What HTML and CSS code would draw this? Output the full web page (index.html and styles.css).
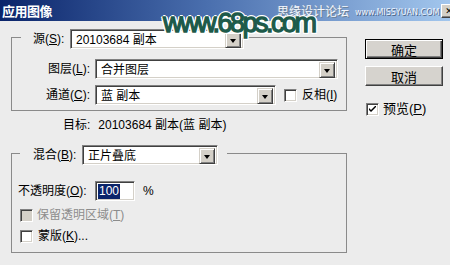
FILE: index.html
```html
<!DOCTYPE html>
<html lang="zh-CN">
<head>
<meta charset="utf-8">
<title>应用图像</title>
<link rel="stylesheet" href="styles.css">
</head>
<body>
<div class="dialog">
  <div class="titlebar">
    <span class="title">应用图像</span>
    <span class="close">✕</span>
  </div>
  <div class="content">
    <div class="main">
      <fieldset class="group group-src">
        <legend class="legend legend-src">
          <span class="lbl lbl-src">源(<u>S</u>):</span>
          <span class="combo combo-src"><span class="combo-text">20103684 副本</span><span class="drop"></span></span>
        </legend>
        <div class="row row-first">
          <span class="lbl lbl-field">图层(<u>L</u>):</span>
          <span class="combo combo-layer"><span class="combo-text">合并图层</span><span class="drop"></span></span>
        </div>
        <div class="row row-second">
          <span class="lbl lbl-field">通道(<u>C</u>):</span>
          <span class="combo combo-channel"><span class="combo-text">蓝 副本</span><span class="drop"></span></span>
          <span class="check check-invert"></span>
          <span class="check-label">反相(<u>I</u>)</span>
        </div>
      </fieldset>
      <div class="target"><span>目标:</span><span class="target-name">20103684 副本(蓝 副本)</span></div>
      <fieldset class="group group-blend">
        <legend class="legend legend-blend">
          <span class="lbl lbl-blend">混合(<u>B</u>):</span>
          <span class="combo combo-blend"><span class="combo-text">正片叠底</span><span class="drop"></span></span>
        </legend>
        <div class="row row-opacity">
          <span class="lbl lbl-opacity">不透明度(<u>O</u>):</span>
          <span class="field"><span class="sel">100</span></span>
          <span class="pct">%</span>
        </div>
        <div class="row row-check row-preserve">
          <span class="check check-disabled"></span>
          <span class="check-label disabled">保留透明区域(<u>T</u>)</span>
        </div>
        <div class="row row-check row-mask">
          <span class="check"></span>
          <span class="check-label">蒙版(<u>K</u>)...</span>
        </div>
      </fieldset>
    </div>
    <div class="side">
      <span class="btn btn-default">确定</span>
      <span class="btn btn-cancel">取消</span>
      <div class="preview">
        <span class="check check-on"><svg width="7" height="7" viewBox="0 0 7 7"><path d="M0 2 L0 4 L2 6 L7 1 L7 -1 L2 4 Z" fill="#000"/></svg></span>
        <span class="check-label">预览(<u>P</u>)</span>
      </div>
    </div>
  </div>
  <div class="wm-cn">思缘设计论坛</div>
  <div class="wm-en">www.MISSYUAN.COM</div>
  <div class="watermark">www.68ps.com</div>
</div>
</body>
</html>
```
FILE: styles.css
```css
* { box-sizing: border-box; }
html, body { margin: 0; padding: 0; }
body {
  width: 450px;
  height: 265px;
  overflow: hidden;
  background: #ececec;
  font: 12px "Liberation Sans", "Noto Sans CJK SC", sans-serif;
  color: #000;
}
u { text-decoration: underline; text-underline-offset: 1px; }

.dialog { position: relative; width: 460px; height: 265px; }

.titlebar {
  height: 21px;
  display: flex;
  align-items: center;
  padding-left: 2px;
  background: linear-gradient(to right, #0a246a 0%, #4a6fae 45%, #a6caf0 100%);
}
.title {
  color: #fff;
  font: bold 13px "Noto Sans CJK SC", sans-serif;
  letter-spacing: -0.5px;
  line-height: 14px;
}
.close {
  margin-left: auto;
  margin-right: 3px;
  width: 16px;
  height: 14px;
  background: #d4d0c8;
  border: 1px solid;
  border-color: #fff #404040 #404040 #fff;
  box-shadow: inset -1px -1px 0 #808080;
  font: bold 9px "DejaVu Sans", sans-serif;
  line-height: 12px;
  text-align: center;
  color: #000;
}

.content { display: flex; padding: 8px 0 0 11px; }
.main { width: 336px; display: flex; flex-direction: column; }

.group {
  margin: 0;
  border: 1px solid #8a8a8a;
  padding: 0;
  min-width: 0;
}
.legend {
  display: flex;
  align-items: flex-start;
  height: 17px;
  padding: 0;
}
.legend-src { margin-left: 9px; padding: 0 3px 0 12px; }
.legend-blend { margin-left: 8px; padding: 0 9px 0 13px; }

.lbl { line-height: 20px; white-space: nowrap; }
.lbl-src { width: 37px; }
.lbl-blend { width: 49px; }
.lbl-field { width: 78px; text-align: right; margin-right: 5px; }
.lbl-opacity { width: 77px; }

.combo {
  display: flex;
  height: 20px;
  flex: none;
  background: #fff;
  border: 1px solid;
  border-color: #808080 #fff #fff #808080;
  box-shadow: inset 1px 1px 0 #404040, inset -1px -1px 0 #d4d0c8;
  padding: 2px;
}
.combo-text { flex: 1; line-height: 16px; padding-left: 3px; white-space: nowrap; }
.combo-src { width: 174px; }
.combo-layer { width: 243px; }
.combo-channel { width: 181px; }
.combo-blend { width: 136px; }

.drop {
  width: 16px;
  height: 16px;
  flex: none;
  background: #d4d0c8;
  border: 1px solid;
  border-color: #d4d0c8 #404040 #404040 #d4d0c8;
  box-shadow: inset 1px 1px 0 #fff, inset -1px -1px 0 #808080;
  display: flex;
  align-items: center;
  justify-content: center;
}
.drop::before {
  content: "";
  border-left: 3.5px solid transparent;
  border-right: 3.5px solid transparent;
  border-top: 4px solid #000;
  margin-top: 1px;
}

.row { display: flex; align-items: center; height: 20px; }
.row-first { margin-top: 13px; }
.row-second { margin-top: 6px; margin-bottom: 5px; }

.check {
  width: 13px;
  height: 13px;
  flex: none;
  background: #fff;
  border: 1px solid;
  border-color: #808080 #fff #fff #808080;
  box-shadow: inset 1px 1px 0 #404040, inset -1px -1px 0 #d4d0c8;
  display: flex;
  align-items: center;
  justify-content: center;
}
.check-disabled { background: #d4d0c8; }
.check-invert { margin-left: 8px; }
.check-label { margin-left: 5px; white-space: nowrap; line-height: 20px; }
.check-label.disabled { color: #8c8c8c; margin-left: 4px; }

.target {
  height: 34px;
  padding: 5px 0 0 52px;
  line-height: 18px;
  display: flex;
}
.target-name { margin-left: 8px; }

.row-opacity { margin-top: 19px; padding-left: 6px; }
.field {
  width: 40px;
  height: 20px;
  background: #fff;
  border: 1px solid;
  border-color: #808080 #fff #fff #808080;
  box-shadow: inset 1px 1px 0 #404040, inset -1px -1px 0 #d4d0c8;
  padding: 2px 0 0 2px;
}
.sel {
  display: inline-block;
  background: #0a246a;
  color: #fff;
  line-height: 15px;
  padding: 0 1px;
}
.pct { margin-left: 8px; }

.row-check { padding-left: 8px; }
.row-preserve { margin-top: 4px; }
.row-mask { margin-top: 1px; margin-bottom: 6px; }

.side {
  margin-left: 18px;
  padding-top: 10px;
  display: flex;
  flex-direction: column;
  align-items: flex-start;
}
.btn {
  width: 78px;
  height: 20px;
  display: flex;
  align-items: center;
  justify-content: center;
  background: #d6d3ce;
  border: 1px solid;
  border-color: #fff #404040 #404040 #fff;
  box-shadow: inset -1px -1px 0 #808080;
  font-size: 13px;
}
.btn-default {
  border: 1px solid #000;
  box-shadow: inset 1px 1px 0 #fff, inset -1px -1px 0 #404040, inset -2px -2px 0 #808080;
}
.btn-cancel { margin-top: 7px; }
.preview { display: flex; align-items: center; margin-top: 13px; margin-left: 1px; }
.preview .check-label { margin-left: 4px; font-size: 13px; }

.watermark {
  position: absolute;
  left: 163px;
  top: 7px;
  font: 27px "Liberation Sans", sans-serif;
  letter-spacing: -2.5px;
  color: #1d5a4a;
  -webkit-text-stroke: 1.3px #1d5a4a;
  text-shadow: 2px 0 0 #fff, -2px 0 0 #fff, 0 2px 0 #fff, 0 -2px 0 #fff, 1.5px 1.5px 0 #fff, -1.5px -1.5px 0 #fff, 1.5px -1.5px 0 #fff, -1.5px 1.5px 0 #fff;
  line-height: 32px;
}
.wm-cn {
  position: absolute;
  left: 277px;
  top: 4px;
  font: 12px "Noto Sans CJK SC", sans-serif;
  color: #f4f8ff;
  text-shadow: 1px 1px 0 #6a7f96, -1px 0 0 #8aa0b8;
  line-height: 14px;
}
.wm-en {
  position: absolute;
  left: 355px;
  top: 8px;
  font: 8px "DejaVu Sans", sans-serif;
  color: #eef4ff;
  text-shadow: 1px 1px 0 #4a6080;
  line-height: 10px;
}
```
